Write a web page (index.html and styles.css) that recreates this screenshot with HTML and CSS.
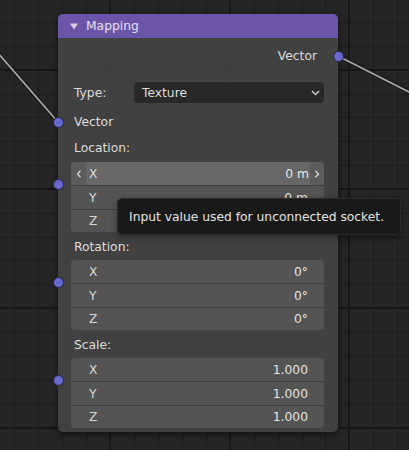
FILE: index.html
```html
<!DOCTYPE html>
<html>
<head>
<meta charset="utf-8">
<link rel="stylesheet" href="styles.css">
</head>
<body>
<div class="canvas">
  <svg class="grid" width="409" height="450" viewBox="0 0 409 450">
    <g class="minor" stroke="#1d1d1d" stroke-width="1">
      <line x1="14.5" y1="0" x2="14.5" y2="450"/>
      <line x1="38.5" y1="0" x2="38.5" y2="450"/>
      <line x1="62.5" y1="0" x2="62.5" y2="450"/>
      <line x1="86.5" y1="0" x2="86.5" y2="450"/>
      <line x1="134.5" y1="0" x2="134.5" y2="450"/>
      <line x1="158.5" y1="0" x2="158.5" y2="450"/>
      <line x1="182.5" y1="0" x2="182.5" y2="450"/>
      <line x1="206.5" y1="0" x2="206.5" y2="450"/>
      <line x1="254.5" y1="0" x2="254.5" y2="450"/>
      <line x1="278.5" y1="0" x2="278.5" y2="450"/>
      <line x1="302.5" y1="0" x2="302.5" y2="450"/>
      <line x1="325.5" y1="0" x2="325.5" y2="450"/>
      <line x1="373.5" y1="0" x2="373.5" y2="450"/>
      <line x1="397.5" y1="0" x2="397.5" y2="450"/>
      <line x1="0" y1="22.5" x2="409" y2="22.5"/>
      <line x1="0" y1="46.5" x2="409" y2="46.5"/>
      <line x1="0" y1="94.5" x2="409" y2="94.5"/>
      <line x1="0" y1="117.5" x2="409" y2="117.5"/>
      <line x1="0" y1="141.5" x2="409" y2="141.5"/>
      <line x1="0" y1="165.5" x2="409" y2="165.5"/>
      <line x1="0" y1="213.5" x2="409" y2="213.5"/>
      <line x1="0" y1="237.5" x2="409" y2="237.5"/>
      <line x1="0" y1="260.5" x2="409" y2="260.5"/>
      <line x1="0" y1="284.5" x2="409" y2="284.5"/>
      <line x1="0" y1="332.5" x2="409" y2="332.5"/>
      <line x1="0" y1="356.5" x2="409" y2="356.5"/>
      <line x1="0" y1="380.5" x2="409" y2="380.5"/>
      <line x1="0" y1="404.5" x2="409" y2="404.5"/>
    </g>
    <g class="major" stroke="#161616" stroke-width="2">
      <line x1="110" y1="0" x2="110" y2="450"/>
      <line x1="230" y1="0" x2="230" y2="450"/>
      <line x1="349" y1="0" x2="349" y2="450"/>
      <line x1="0" y1="70" x2="409" y2="70"/>
      <line x1="0" y1="189" x2="409" y2="189"/>
      <line x1="0" y1="308" x2="409" y2="308"/>
      <line x1="0" y1="428" x2="409" y2="428"/>
    </g>
    <g class="wires">
      <line x1="-2" y1="53" x2="58" y2="122" stroke="#151515" stroke-width="3.5"/>
      <line x1="-2" y1="53" x2="58" y2="122" stroke="#a8a8a8" stroke-width="1.8"/>
      <line x1="338" y1="56" x2="411" y2="93" stroke="#151515" stroke-width="3.5"/>
      <line x1="338" y1="56" x2="411" y2="93" stroke="#a8a8a8" stroke-width="1.8"/>
    </g>
  </svg>

  <div class="node">
    <div class="header">
      <svg class="tri" width="8" height="7" viewBox="0 0 8 7"><polygon points="0,0.5 8,0.5 4,6.5" fill="#d6d0e6"/></svg>
      <span class="title">Mapping</span>
    </div>
    <div class="body">
      <div class="row out">Vector<span class="socket sock-out"></span></div>

      <div class="row type">
        <span class="lbl">Type:</span>
        <div class="dropdown">
          <span>Texture</span>
          <svg class="chev" width="9" height="6" viewBox="0 0 9 6"><polyline points="1,1 4.5,4.5 8,1" fill="none" stroke="#cfcfcf" stroke-width="1.5"/></svg>
        </div>
      </div>

      <div class="row vin"><span class="socket sock-in"></span>Vector</div>

      <div class="glabel first">Location:</div>
      <div class="fields">
        <span class="socket sock-field"></span>
        <div class="field hover">
          <span class="arr left"><svg width="6" height="8" viewBox="0 0 6 8"><polyline points="4.5,0.8 1.5,4 4.5,7.2" fill="none" stroke="#dcdcdc" stroke-width="1.3"/></svg></span>
          <span class="axis">X</span>
          <span class="val">0 m</span>
          <span class="arr right"><svg width="6" height="8" viewBox="0 0 6 8"><polyline points="1.5,0.8 4.5,4 1.5,7.2" fill="none" stroke="#dcdcdc" stroke-width="1.3"/></svg></span>
        </div>
        <div class="field"><span class="axis">Y</span><span class="val">0 m</span></div>
        <div class="field"><span class="axis">Z</span><span class="val">0 m</span></div>
      </div>

      <div class="glabel">Rotation:</div>
      <div class="fields">
        <span class="socket sock-field"></span>
        <div class="field"><span class="axis">X</span><span class="val">0°</span></div>
        <div class="field"><span class="axis">Y</span><span class="val">0°</span></div>
        <div class="field"><span class="axis">Z</span><span class="val">0°</span></div>
      </div>

      <div class="glabel">Scale:</div>
      <div class="fields">
        <span class="socket sock-field"></span>
        <div class="field"><span class="axis">X</span><span class="val">1.000</span></div>
        <div class="field"><span class="axis">Y</span><span class="val">1.000</span></div>
        <div class="field"><span class="axis">Z</span><span class="val">1.000</span></div>
      </div>
    </div>
  </div>

  <div class="tooltip">Input value used for unconnected socket.</div>
</div>
</body>
</html>
```

FILE: styles.css
```css
* {
  box-sizing: border-box;
}

html, body {
  margin: 0;
  padding: 0;
  background: #252525;
}

body {
  font-family: "DejaVu Sans", "Liberation Sans", sans-serif;
  font-size: 12.3px;
  color: #dcdcdc;
}

.canvas {
  position: relative;
  width: 409px;
  height: 450px;
  overflow: hidden;
  background: #252525;
}

.grid {
  position: absolute;
  left: 0;
  top: 0;
  display: block;
}

.grid line {
  shape-rendering: crispEdges;
}

.grid .wires line {
  shape-rendering: auto;
  stroke-linecap: round;
}

.node {
  position: absolute;
  left: 58px;
  top: 14px;
  width: 280px;
  height: 418px;
  background: rgba(66, 66, 66, 0.97);
  border-radius: 5px;
  box-shadow: 0 2px 6px rgba(0, 0, 0, 0.55);
}

.header {
  height: 24px;
  background: #6b55a9;
  border-radius: 5px 5px 0 0;
  display: flex;
  align-items: center;
  padding-left: 12px;
  color: #e4e0ee;
}

.tri {
  display: block;
  margin-right: 8px;
}

.title {
  line-height: 24px;
}

.body {
  padding: 0 14px 0 13px;
}

.row {
  position: relative;
  display: flex;
  align-items: center;
}

.out {
  margin-top: 6px;
  height: 24px;
  justify-content: flex-end;
  padding-right: 7px;
}

.type {
  margin-top: 14px;
  height: 21px;
}

.lbl {
  width: 63px;
  padding-left: 3px;
}

.dropdown {
  flex: 1;
  height: 21px;
  background: #282828;
  border-radius: 4px;
  display: flex;
  align-items: center;
  justify-content: space-between;
  padding: 0 4px 0 8px;
  color: #dedede;
}

.chev {
  display: block;
}

.vin {
  margin-top: 9px;
  height: 20px;
  padding-left: 3px;
}

.glabel {
  margin-top: 5px;
  height: 20px;
  line-height: 20px;
  padding-left: 3px;
}

.glabel.first {
  margin-top: 6px;
}

.fields {
  position: relative;
  margin-top: 3px;
  background: #545454;
  border-radius: 4px;
}

.glabel.first + .fields {
  margin-top: 4px;
}

.field {
  display: flex;
  align-items: center;
  height: 23px;
  padding: 0 16px 0 18px;
  border-top: 1px solid #3f3f3f;
  color: #e2e2e2;
}

.field:nth-of-type(1) {
  border-top: 0;
  border-radius: 4px 4px 0 0;
}

.field:nth-of-type(2) {
  height: 24px;
}

.field:nth-of-type(3) {
  border-radius: 0 0 4px 4px;
}

.axis {
  flex: 1;
  color: #d8d8d8;
}

.val {
  color: #e6e6e6;
}

.field.hover {
  background: #676767;
  padding: 0;
}

.field.hover .axis {
  padding-left: 3px;
}

.field.hover .val {
  padding-right: 1px;
}

.arr {
  height: 100%;
  display: flex;
  align-items: center;
  justify-content: center;
  background: #5b5b5b;
}

.arr svg {
  display: block;
}

.arr.left {
  width: 15px;
  border-radius: 4px 0 0 0;
}

.arr.right {
  width: 14px;
  border-radius: 0 4px 0 0;
}

.socket {
  position: absolute;
  width: 11px;
  height: 11px;
  border-radius: 50%;
  background: #6767d0;
  border: 1px solid #262640;
}

.sock-out {
  right: -19.5px;
  top: 6.5px;
}

.sock-in {
  left: -18.5px;
  top: 4.5px;
}

.sock-field {
  left: -18.5px;
  top: 16.5px;
  z-index: 1;
}

.tooltip {
  position: absolute;
  left: 117px;
  top: 198px;
  width: 284px;
  height: 37px;
  background: #191919;
  border: 1px solid #2c2c2c;
  border-radius: 5px;
  padding-left: 11px;
  display: flex;
  align-items: center;
  color: #e4e4e4;
  box-shadow: 0 2px 6px rgba(0, 0, 0, 0.4);
}
```
